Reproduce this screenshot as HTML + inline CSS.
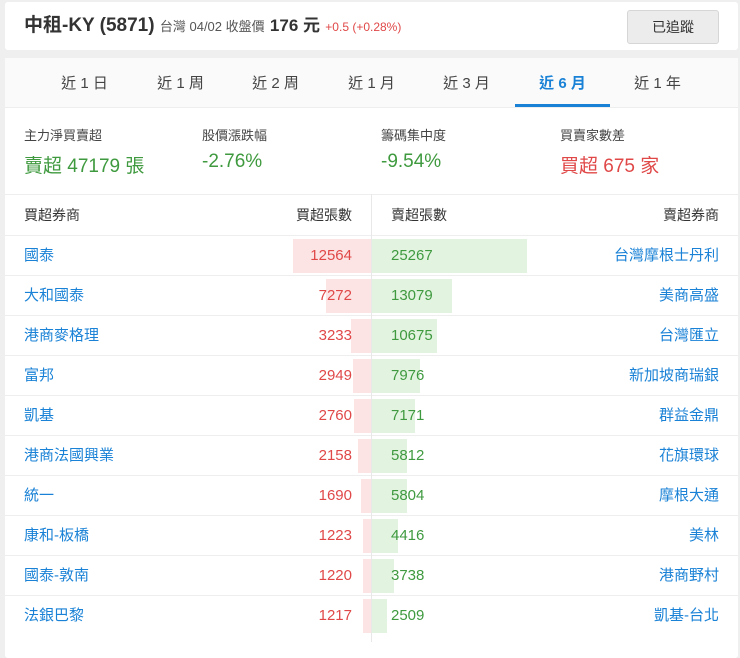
<!DOCTYPE html>
<html><head><meta charset="utf-8"><style>
*{margin:0;padding:0;box-sizing:border-box}
body{width:740px;height:642px;overflow:hidden;background:#efefef;font-family:"Liberation Sans","Noto Sans CJK TC",sans-serif;color:#333;position:relative}
.hd{position:absolute;left:5px;top:2px;width:733px;height:48px;background:#fff;border-radius:3px}
.hd .t{position:absolute;left:19px;top:0;line-height:48px;font-size:19px;color:#333;white-space:nowrap}
.hd .t b{font-weight:bold}
.s{font-size:13px;color:#555}
.p{font-size:17px;font-weight:bold}
.c{font-size:12px;color:#e04848}
.btn{position:absolute;left:622px;top:8px;width:92px;height:34px;background:#ececec;border:1px solid #d6d6d6;border-radius:3px;font-size:14px;text-align:center;line-height:32px;color:#333}
.card{position:absolute;left:5px;top:58px;width:733px;height:600px;background:#fff;border-radius:3px}
.tabs{position:absolute;left:0;top:0;width:733px;height:50px;background:#fafafa;border-bottom:1px solid #eee}
.tab{position:absolute;top:0;line-height:52px;font-size:15px;color:#444;width:95px;text-align:center}
.tab.a{color:#1a82d6;font-weight:bold}
.ul{position:absolute;left:510px;top:46px;width:95px;height:3px;background:#1a82d6}
.lab{position:absolute;top:67px;font-size:13px;color:#444}
.val{position:absolute;top:93px;font-size:19px;color:#3f9a3f}
.row{position:absolute;left:5px;width:733px;height:40px;border-top:1px solid #eee;font-size:15px}
.row span{position:absolute;top:0;line-height:40px}
.bar{position:absolute;top:3px;height:34px}
.r{background:#fde4e4}.g{background:#e2f3e0}
.hdr{position:absolute;left:5px;top:194px;width:733px;height:41px;font-size:14px;color:#333;border-top:1px solid #eee}
.hdr span{position:absolute;top:0;line-height:41px}
.vl{position:absolute;left:371px;top:194px;width:1px;height:448px;background:#e8e8e8}
</style></head><body>
<div class="hd"><div class="t"><b>中租-KY (5871)</b> <span class="s">台灣 04/02 收盤價</span> <span class="p">176 元</span> <span class="c">+0.5 (+0.28%)</span></div><div class="btn">已追蹤</div></div>
<div class="card">
<div class="tabs">
<div class="tab" style="left:32px">近 1 日</div>
<div class="tab" style="left:128px">近 1 周</div>
<div class="tab" style="left:223px">近 2 周</div>
<div class="tab" style="left:319px">近 1 月</div>
<div class="tab" style="left:414px">近 3 月</div>
<div class="tab a" style="left:510px">近 6 月</div>
<div class="tab" style="left:605px">近 1 年</div>
<div class="ul"></div>
</div>
<div class="lab" style="left:19px">主力淨買賣超</div>
<div class="lab" style="left:197px">股價漲跌幅</div>
<div class="lab" style="left:376px">籌碼集中度</div>
<div class="lab" style="left:555px">買賣家數差</div>
<div class="val" style="left:19px">賣超 47179 張</div>
<div class="val" style="left:197px">-2.76%</div>
<div class="val" style="left:376px">-9.54%</div>
<div class="val" style="left:555px;color:#e04848">買超 675 家</div>
</div>
<div class="hdr"><span style="left:19px">買超券商</span><span style="right:386px">買超張數</span><span style="left:386px">賣超張數</span><span style="right:19px">賣超券商</span></div>
<div class="row" style="top:235px"><div class="bar r" style="left:288px;width:78px"></div><div class="bar g" style="left:366px;width:156px"></div><span style="left:19px;color:#1a82d6">國泰</span><span style="right:386px;color:#e04848">12564</span><span style="left:386px;color:#3f9a3f">25267</span><span style="right:19px;color:#1a82d6">台灣摩根士丹利</span></div>
<div class="row" style="top:275px"><div class="bar r" style="left:321px;width:45px"></div><div class="bar g" style="left:366px;width:81px"></div><span style="left:19px;color:#1a82d6">大和國泰</span><span style="right:386px;color:#e04848">7272</span><span style="left:386px;color:#3f9a3f">13079</span><span style="right:19px;color:#1a82d6">美商高盛</span></div>
<div class="row" style="top:315px"><div class="bar r" style="left:346px;width:20px"></div><div class="bar g" style="left:366px;width:66px"></div><span style="left:19px;color:#1a82d6">港商麥格理</span><span style="right:386px;color:#e04848">3233</span><span style="left:386px;color:#3f9a3f">10675</span><span style="right:19px;color:#1a82d6">台灣匯立</span></div>
<div class="row" style="top:355px"><div class="bar r" style="left:348px;width:18px"></div><div class="bar g" style="left:366px;width:49px"></div><span style="left:19px;color:#1a82d6">富邦</span><span style="right:386px;color:#e04848">2949</span><span style="left:386px;color:#3f9a3f">7976</span><span style="right:19px;color:#1a82d6">新加坡商瑞銀</span></div>
<div class="row" style="top:395px"><div class="bar r" style="left:349px;width:17px"></div><div class="bar g" style="left:366px;width:44px"></div><span style="left:19px;color:#1a82d6">凱基</span><span style="right:386px;color:#e04848">2760</span><span style="left:386px;color:#3f9a3f">7171</span><span style="right:19px;color:#1a82d6">群益金鼎</span></div>
<div class="row" style="top:435px"><div class="bar r" style="left:353px;width:13px"></div><div class="bar g" style="left:366px;width:36px"></div><span style="left:19px;color:#1a82d6">港商法國興業</span><span style="right:386px;color:#e04848">2158</span><span style="left:386px;color:#3f9a3f">5812</span><span style="right:19px;color:#1a82d6">花旗環球</span></div>
<div class="row" style="top:475px"><div class="bar r" style="left:356px;width:10px"></div><div class="bar g" style="left:366px;width:36px"></div><span style="left:19px;color:#1a82d6">統一</span><span style="right:386px;color:#e04848">1690</span><span style="left:386px;color:#3f9a3f">5804</span><span style="right:19px;color:#1a82d6">摩根大通</span></div>
<div class="row" style="top:515px"><div class="bar r" style="left:358px;width:8px"></div><div class="bar g" style="left:366px;width:27px"></div><span style="left:19px;color:#1a82d6">康和-板橋</span><span style="right:386px;color:#e04848">1223</span><span style="left:386px;color:#3f9a3f">4416</span><span style="right:19px;color:#1a82d6">美林</span></div>
<div class="row" style="top:555px"><div class="bar r" style="left:358px;width:8px"></div><div class="bar g" style="left:366px;width:23px"></div><span style="left:19px;color:#1a82d6">國泰-敦南</span><span style="right:386px;color:#e04848">1220</span><span style="left:386px;color:#3f9a3f">3738</span><span style="right:19px;color:#1a82d6">港商野村</span></div>
<div class="row" style="top:595px"><div class="bar r" style="left:358px;width:8px"></div><div class="bar g" style="left:366px;width:16px"></div><span style="left:19px;color:#1a82d6">法銀巴黎</span><span style="right:386px;color:#e04848">1217</span><span style="left:386px;color:#3f9a3f">2509</span><span style="right:19px;color:#1a82d6">凱基-台北</span></div>
<div class="vl"></div>
</body></html>
